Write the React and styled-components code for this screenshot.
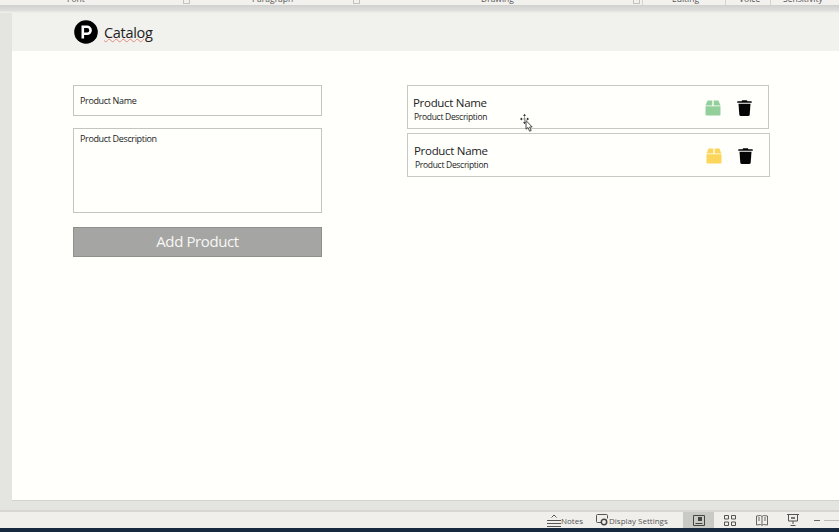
import styled, { createGlobalStyle } from "styled-components";

const GlobalStyle = createGlobalStyle`
    html, body {
        margin: 0;
        padding: 0;
        height: 100%;
        overflow: hidden;
        background: #e4e4e1;
    }
    * {
        box-sizing: border-box;
    }
`;

const ribbonGroups = [
    { label: "Font", width: 192, left: 67, launcher: true },
    { label: "Paragraph", width: 170, left: 60, launcher: true },
    { label: "Drawing", width: 280, left: 119, launcher: true },
    { label: "Editing", width: 83, left: 29, divider: true },
    { label: "Voice", width: 45, left: 13, divider: true },
    { label: "Sensitivity", width: 69, left: 12, divider: true },
];

const products = [
    { color: "#93cf9b", shift: 0 },
    { color: "#fbd65a", shift: 1 },
];

function BoxIcon({ color }) {
    return (
        <svg width="16" height="16" viewBox="0 0 16 16">
            <path fill={color} d="M2.600 0.500h4.700v5H0.500z" />
            <path fill={color} d="M8.700 0.500h4.700l2.100 5H8.700z" />
            <path fill={color} d="M0.500 6.300h15v8.200a1 1 0 0 1-1 1h-13a1 1 0 0 1-1-1z" />
        </svg>
    );
}

function TrashIcon() {
    return (
        <svg width="15" height="16" viewBox="0 0 15 16">
            <path fill="#050505" d="M5.200 0.200h4.600l.7 1.100h3.700c.4 0 .6.300.6.600v.8H.2v-.8c0-.3.2-.6.600-.6h3.700z" />
            <path fill="#050505" d="M1.500 3.800h12l-.8 10.900c-.1.700-.6 1.200-1.300 1.200H3.600c-.7 0-1.200-.5-1.300-1.200z" />
        </svg>
    );
}

function MoveCursor() {
    return (
        <svg width="14" height="18" viewBox="0 0 14 18">
            <path stroke="#666" strokeWidth=".6" fill="none" d="M4.500 1.500v7M1 5h7" />
            <path fill="#111" d="M4.500 0l1.500 1.800H3zM4.500 10l-1.500-1.800h3zM0 5l1.800-1.500v3zM9 5l-1.800-1.500v3z" />
            <path fill="#fff" stroke="#333" strokeWidth=".9" d="M6 6.500v8.700l2-1.700 1.600 3.700 1.600-.7-1.600-3.500h2.600z" />
        </svg>
    );
}

function NotesIcon() {
    return (
        <svg width="14" height="13" viewBox="0 0 14 13">
            <path stroke="#555" strokeWidth="1" fill="none" d="M4.500 3.500l2.500-2.500 2.500 2.500M0 6.500h14M0 9.500h14M0 12.500h14" />
        </svg>
    );
}

function DisplayIcon() {
    return (
        <svg width="12" height="12" viewBox="0 0 12 12">
            <path stroke="#555" strokeWidth="1" fill="none" d="M5 8.500H1.500a1 1 0 0 1-1-1v-6a1 1 0 0 1 1-1h9a1 1 0 0 1 1 1v3" />
            <circle cx="8" cy="8" r="2.700" fill="none" stroke="#444" strokeWidth="1.500" />
        </svg>
    );
}

function NormalIcon() {
    return (
        <svg width="12" height="11" viewBox="0 0 12 11">
            <path stroke="#444" fill="none" d="M.5.500h11v10H.5zM2.500 8.500h7" />
            <path fill="#444" d="M5 2h4v4H5z" />
        </svg>
    );
}

function SorterIcon() {
    return (
        <svg width="12" height="11" viewBox="0 0 12 11">
            <path stroke="#555" fill="none" d="M.5.500h4v3.500h-4zM7.500.500h4v3.500h-4zM.5 7h4v3.500h-4zM7.500 7h4v3.500h-4z" />
        </svg>
    );
}

function ReadingIcon() {
    return (
        <svg width="12" height="11" viewBox="0 0 12 11">
            <path stroke="#666" fill="none" d="M.5 1l4-.5 1.500 1 1.500-1 4 .5v9l-4-.5-1.500 1-1.500-1-4 .5zM6 1.500v8.500M2 3h2M2 5h2M8 3h2M8 5h2" />
        </svg>
    );
}

function PresentIcon() {
    return (
        <svg width="12" height="12" viewBox="0 0 12 12">
            <path stroke="#555" fill="none" d="M0 .500h12M1.500.500v6.500h9V.500M6 7v3M3.500 11.500h5" />
            <path fill="#777" d="M4 3h4v2H4z" />
        </svg>
    );
}

function App() {
    return (
        <>
            <GlobalStyle />
            <Window>
                <Ribbon>
                    {ribbonGroups.map(group => (
                        <RibbonGroup
                            key={group.label}
                            $width={group.width}
                            $left={group.left}
                            $divider={group.divider}
                        >
                            {group.label}
                            {group.launcher && <Launcher />}
                        </RibbonGroup>
                    ))}
                </Ribbon>
                <RibbonShadow />
                <Workspace>
                    <Slide>
                        <Header>
                            <Logo>
                                <svg width="24" height="24" viewBox="0 0 24 24">
                                    <circle cx="12" cy="12" r="11.800" fill="#000" />
                                    <path
                                        fill="none"
                                        stroke="#fff"
                                        strokeWidth="2.600"
                                        d="M8.800 18.500V6.800h4.300a3.500 3.500 0 0 1 0 7H8.800"
                                    />
                                </svg>
                            </Logo>
                            <Title>Catalog</Title>
                        </Header>
                        <Body>
                            <Form>
                                <NameField>Product Name</NameField>
                                <DescriptionField>Product Description</DescriptionField>
                                <AddButton>Add Product</AddButton>
                            </Form>
                            <List>
                                {products.map(product => (
                                    <Card key={product.color} $shift={product.shift}>
                                        <CardText>
                                            <CardName>Product Name</CardName>
                                            <CardDescription>Product Description</CardDescription>
                                        </CardText>
                                        <CardIcons>
                                            <BoxIcon color={product.color} />
                                            <TrashIcon />
                                        </CardIcons>
                                    </Card>
                                ))}
                                <CursorMark>
                                    <MoveCursor />
                                </CursorMark>
                            </List>
                        </Body>
                    </Slide>
                </Workspace>
                <StatusBar>
                    <StatusItem $gap={0}>
                        <NotesIcon />
                        Notes
                    </StatusItem>
                    <StatusItem $gap={1} $left={13}>
                        <DisplayIcon />
                        Display Settings
                    </StatusItem>
                    <ViewButtons>
                        <ViewButton $active>
                            <NormalIcon />
                        </ViewButton>
                        <ViewButton>
                            <SorterIcon />
                        </ViewButton>
                        <ViewButton>
                            <ReadingIcon />
                        </ViewButton>
                        <ViewButton>
                            <PresentIcon />
                        </ViewButton>
                    </ViewButtons>
                    <ZoomMinus />
                    <ZoomTrack />
                </StatusBar>
                <BottomStrip />
            </Window>
        </>
    );
}

export default App;

const Window = styled.div`
    width: 839px;
    height: 532px;
    display: flex;
    flex-direction: column;
    overflow: hidden;
    background: #e4e4e1;
    font-family: "Open Sans", "Noto Sans", sans-serif;
`;

const Ribbon = styled.div`
    height: 5px;
    flex: none;
    display: flex;
    align-items: flex-end;
    overflow: hidden;
    background: #f3f1ee;
`;

const RibbonGroup = styled.div`
    width: ${props => props.$width}px;
    flex: none;
    display: flex;
    align-items: flex-end;
    justify-content: space-between;
    padding-left: ${props => props.$left}px;
    padding-right: 2px;
    border-left: ${props => (props.$divider ? "1px solid #d5d3d0" : "none")};
    font-size: 8.500px;
    line-height: 12px;
    color: #555;
    white-space: nowrap;
`;

const Launcher = styled.span`
    width: 7px;
    height: 4px;
    margin-bottom: 1px;
    border: 1px solid #c4c2bf;
    border-top: none;
`;

const RibbonShadow = styled.div`
    height: 8px;
    flex: none;
    background: linear-gradient(#d0d0ce, #dfdfdd 70%, #f1f1ee);
`;

const Workspace = styled.div`
    flex: 1;
    min-height: 0;
    display: flex;
    padding: 0 0 9px 12px;
    background: #e4e4e1;
    border-bottom: 2px solid #d8d6d2;
`;

const Slide = styled.div`
    flex: 1;
    display: flex;
    flex-direction: column;
    background: #fffffc;
    border-bottom: 1px solid #d2d2cf;
`;

const Header = styled.div`
    height: 38px;
    flex: none;
    display: flex;
    align-items: center;
    gap: 6px;
    padding-left: 62px;
    background: #f1f1ee;
`;

const Logo = styled.div`
    width: 24px;
    height: 24px;
    display: flex;
`;

const Title = styled.span`
    padding-top: 2px;
    font-size: 14.500px;
    line-height: 20px;
    letter-spacing: -0.3px;
    color: #222;
    text-decoration: underline wavy #e58a7b 1px;
    text-underline-offset: 0;
`;

const Body = styled.div`
    display: flex;
    align-items: flex-start;
    gap: 85px;
    padding: 34px 0 0 61px;
`;

const Form = styled.div`
    width: 249px;
    flex: none;
    display: flex;
    flex-direction: column;
`;

const NameField = styled.div`
    height: 31px;
    display: flex;
    align-items: center;
    padding-left: 6px;
    border: 1px solid #c4c4c1;
    font-size: 9px;
    letter-spacing: -0.35px;
    color: #222;
`;

const DescriptionField = styled.div`
    height: 85px;
    margin-top: 12px;
    padding: 3px 6px;
    border: 1px solid #c4c4c1;
    font-size: 9px;
    line-height: 14px;
    letter-spacing: -0.35px;
    color: #222;
`;

const AddButton = styled.div`
    height: 30px;
    margin-top: 14px;
    padding-bottom: 2px;
    display: flex;
    align-items: center;
    justify-content: center;
    background: #a5a5a3;
    border: 1px solid #8f8f8d;
    font-size: 15px;
    letter-spacing: -0.4px;
    color: #f7f7f5;
`;

const List = styled.div`
    position: relative;
    width: 363px;
    display: flex;
    flex-direction: column;
    gap: 4px;
`;

const Card = styled.div`
    height: 44px;
    width: ${props => 362 + props.$shift}px;
    display: flex;
    align-items: center;
    justify-content: space-between;
    padding: 3px 16px 0 ${props => 5 + props.$shift}px;
    border: 1px solid #c8c8c5;
`;

const CardText = styled.div`
    display: flex;
    flex-direction: column;
    margin-top: 1px;
`;

const CardName = styled.span`
    font-size: 11.500px;
    line-height: 15px;
    letter-spacing: -0.3px;
    color: #222;
`;

const CardDescription = styled.span`
    margin-top: 1px;
    margin-left: 1px;
    font-size: 8.500px;
    line-height: 12px;
    letter-spacing: -0.3px;
    color: #222;
`;

const CardIcons = styled.div`
    display: flex;
    align-items: center;
    gap: 16px;
    margin-top: -2px;
`;

const CursorMark = styled.div`
    position: absolute;
    left: 113px;
    top: 29px;
    display: flex;
`;

const StatusBar = styled.div`
    height: 16px;
    flex: none;
    display: flex;
    align-items: center;
    padding-left: 547px;
    background: #f1efec;
    font-size: 8px;
    color: #555;
`;

const StatusItem = styled.div`
    display: flex;
    align-items: center;
    gap: ${props => props.$gap}px;
    margin-left: ${props => props.$left || 0}px;
    white-space: nowrap;
`;

const ViewButtons = styled.div`
    height: 100%;
    display: flex;
    margin-left: 15px;
`;

const ViewButton = styled.div`
    width: 31.500px;
    height: 100%;
    display: flex;
    align-items: center;
    justify-content: center;
    background: ${props => (props.$active ? "#c9c9c6" : "transparent")};
`;

const ZoomMinus = styled.div`
    width: 6px;
    height: 1px;
    margin-left: 5px;
    background: #666;
`;

const ZoomTrack = styled.div`
    width: 16px;
    height: 1px;
    margin-left: 4px;
    background: #bbb;
`;

const BottomStrip = styled.div`
    height: 4px;
    flex: none;
    background: #16293f;
`;
